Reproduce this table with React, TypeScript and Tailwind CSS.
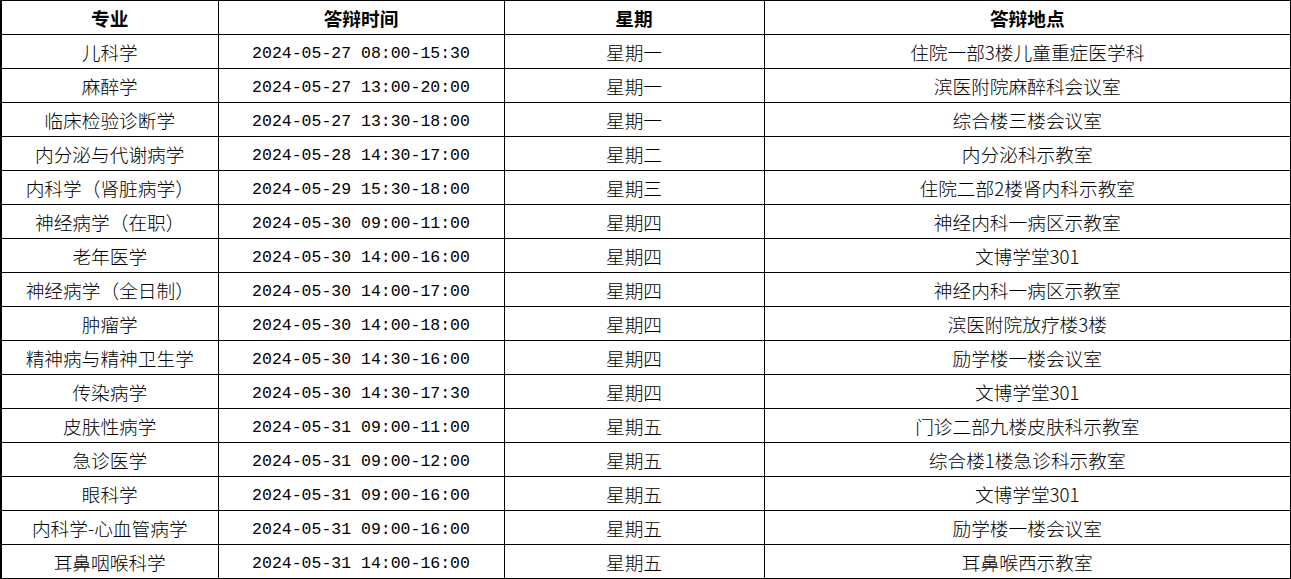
const rows = [
  ["儿科学", "2024-05-27 08:00-15:30", "星期一", "住院一部3楼儿童重症医学科"],
  ["麻醉学", "2024-05-27 13:00-20:00", "星期一", "滨医附院麻醉科会议室"],
  ["临床检验诊断学", "2024-05-27 13:30-18:00", "星期一", "综合楼三楼会议室"],
  ["内分泌与代谢病学", "2024-05-28 14:30-17:00", "星期二", "内分泌科示教室"],
  ["内科学（肾脏病学）", "2024-05-29 15:30-18:00", "星期三", "住院二部2楼肾内科示教室"],
  ["神经病学（在职）", "2024-05-30 09:00-11:00", "星期四", "神经内科一病区示教室"],
  ["老年医学", "2024-05-30 14:00-16:00", "星期四", "文博学堂301"],
  ["神经病学（全日制）", "2024-05-30 14:00-17:00", "星期四", "神经内科一病区示教室"],
  ["肿瘤学", "2024-05-30 14:00-18:00", "星期四", "滨医附院放疗楼3楼"],
  ["精神病与精神卫生学", "2024-05-30 14:30-16:00", "星期四", "励学楼一楼会议室"],
  ["传染病学", "2024-05-30 14:30-17:30", "星期四", "文博学堂301"],
  ["皮肤性病学", "2024-05-31 09:00-11:00", "星期五", "门诊二部九楼皮肤科示教室"],
  ["急诊医学", "2024-05-31 09:00-12:00", "星期五", "综合楼1楼急诊科示教室"],
  ["眼科学", "2024-05-31 09:00-16:00", "星期五", "文博学堂301"],
  ["内科学-心血管病学", "2024-05-31 09:00-16:00", "星期五", "励学楼一楼会议室"],
  ["耳鼻咽喉科学", "2024-05-31 14:00-16:00", "星期五", "耳鼻喉西示教室"],
];

const cjk = "font-['Noto_Sans_CJK_SC',sans-serif]";
const cell = "border border-black text-center p-0 pt-[2px] leading-none";

export default function App() {
  return (
    <div className="w-[1291px] h-[579px] bg-white text-black">
      <table className="w-[1290px] table-fixed border-collapse border-t border-l-2 border-r-2 border-b-2 border-black">
        <colgroup>
          <col className="w-[217px]" />
          <col className="w-[286px]" />
          <col className="w-[260px]" />
          <col className="w-[527px]" />
        </colgroup>
        <thead>
          <tr className="h-[34px]">
            {["专业", "答辩时间", "星期", "答辩地点"].map((h) => (
              <th key={h} className={`${cell} text-[18.7px] font-bold ${cjk}`}>
                {h}
              </th>
            ))}
          </tr>
        </thead>
        <tbody>
          {rows.map((r, i) => (
            <tr key={i} className="h-[34px]">
              <td className={`${cell} text-[18.7px] font-light ${cjk}`}>{r[0]}</td>
              <td className="border border-black text-center p-0 pt-[5px] leading-none text-[16.5px] font-['Liberation_Mono',monospace]">
                {r[1]}
              </td>
              <td className={`${cell} text-[18.7px] font-light ${cjk}`}>{r[2]}</td>
              <td className={`${cell} text-[18.7px] font-light ${cjk}`}>{r[3]}</td>
            </tr>
          ))}
        </tbody>
      </table>
    </div>
  );
}
